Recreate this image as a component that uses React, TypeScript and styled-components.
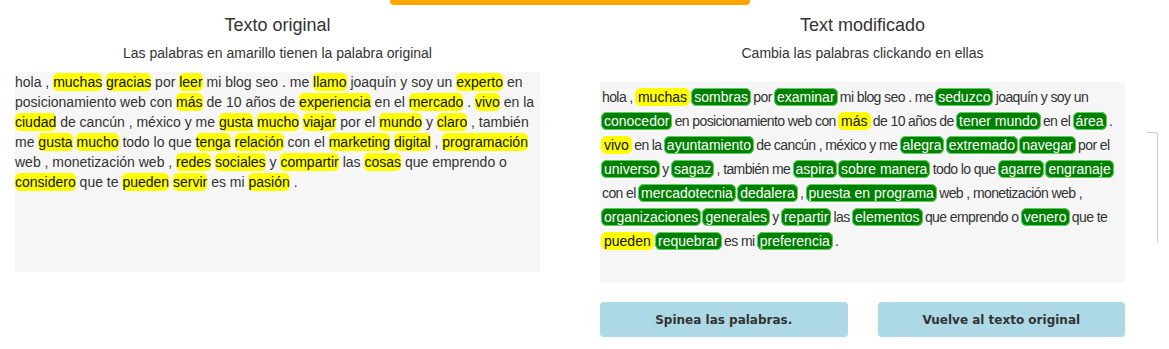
import React from "react";
import styled, { createGlobalStyle } from "styled-components";

const originalText =
  "hola , [muchas] [gracias] por [leer] mi blog seo . me [llamo] joaquín y soy un [experto] en posicionamiento web con [más] de 10 años de [experiencia] en el [mercado] . [vivo] en la [ciudad] de cancún , méxico y me [gusta] [mucho] [viajar] por el [mundo] y [claro] , también me [gusta] [mucho] todo lo que [tenga] [relación] con el [marketing] [digital] , [programación] web , monetización web , [redes] [sociales] y [compartir] las [cosas] que emprendo o [considero] que te [pueden] [servir] es mi [pasión] .";

const modifiedText =
  "hola , [muchas] {sombras} por {examinar} mi blog seo . me {seduzco} joaquín y soy un {conocedor} en posicionamiento web con [más] de 10 años de {tener mundo} en el {área} . [vivo] en la {ayuntamiento} de cancún , méxico y me {alegra} {extremado} {navegar} por el {universo} y {sagaz} , también me {aspira} {sobre manera} todo lo que {agarre} {engranaje} con el {mercadotecnia} {dedalera} , {puesta en programa} web , monetización web , {organizaciones} {generales} y {repartir} las {elementos} que emprendo o {venero} que te [pueden] {requebrar} es mi {preferencia} .";

type Token = { text: string; kind: "plain" | "original" | "changed" };

const tokenize = (src: string): Token[] =>
  src
    .split(/(\[[^\]]+\]|\{[^}]+\})/)
    .filter((part) => part.length > 0)
    .map((part) => {
      if (part.startsWith("[")) return { text: part.slice(1, -1), kind: "original" };
      if (part.startsWith("{")) return { text: part.slice(1, -1), kind: "changed" };
      return { text: part, kind: "plain" };
    });

const App: React.FC = () => {
  const left = tokenize(originalText);
  const right = tokenize(modifiedText);

  return (
    <>
      <GlobalStyle />
      <TopBar />
      <Page>
        <Column>
          <Title>Texto original</Title>
          <Subtitle>Las palabras en amarillo tienen la palabra original</Subtitle>
          <OriginalBox>
            {left.map((t, i) =>
              t.kind === "plain" ? (
                <React.Fragment key={i}>{t.text}</React.Fragment>
              ) : (
                <Mark key={i}>{t.text}</Mark>
              )
            )}
          </OriginalBox>
        </Column>

        <Column>
          <Title>Text modificado</Title>
          <Subtitle>Cambia las palabras clickando en ellas</Subtitle>
          <ModifiedBox>
            {right.map((t, i) =>
              t.kind === "plain" ? (
                <React.Fragment key={i}>{t.text}</React.Fragment>
              ) : (
                <Pill key={i} $changed={t.kind === "changed"}>
                  {t.text}
                </Pill>
              )
            )}
          </ModifiedBox>
          <Buttons>
            <ActionButton>Spinea las palabras.</ActionButton>
            <ActionButton>Vuelve al texto original</ActionButton>
          </Buttons>
        </Column>

        <SideEdge />
      </Page>
    </>
  );
};

const GlobalStyle = createGlobalStyle`
  body {
    margin: 0;
    background: #ffffff;
    font-family: "Liberation Sans", Arial, sans-serif;
    color: #333333;
  }
`;

const TopBar = styled.div`
  width: 360px;
  height: 5px;
  margin-left: 390px;
  background: #ffa500;
  border-radius: 0 0 4px 4px;
`;

const Page = styled.div`
  display: flex;
  align-items: flex-start;
  padding-left: 15px;
  gap: 60px;
`;

const Column = styled.div`
  width: 525px;
  display: flex;
  flex-direction: column;
`;

const Title = styled.h2`
  margin: 9px 0 0;
  font-size: 18px;
  font-weight: normal;
  line-height: 22px;
  text-align: center;
  color: #333333;
`;

const Subtitle = styled.p`
  margin: 9px 0 0;
  font-size: 14px;
  line-height: 17px;
  text-align: center;
  color: #333333;
`;

const OriginalBox = styled.div`
  margin-top: 10px;
  height: 200px;
  background: #f6f6f6;
  font-size: 14px;
  line-height: 20px;
  color: #333333;
`;

const Mark = styled.span`
  background: #ffff00;
  color: #111111;
  border-radius: 5px;
  padding: 1px 0;
`;

const ModifiedBox = styled.div`
  margin-top: 20px;
  height: 200px;
  box-sizing: border-box;
  padding: 3px 2px 0;
  background: #f6f6f6;
  font-size: 14px;
  line-height: 24px;
  letter-spacing: -0.6px;
  color: #333333;
`;

const Pill = styled.span<{ $changed: boolean }>`
  letter-spacing: 0;
  margin: 0 -1px;
  padding: 0 2px;
  border-radius: 6px;
  border: 1px solid ${(p) => (p.$changed ? "#5ccf5c" : "#ffff00")};
  background: ${(p) => (p.$changed ? "#008000" : "#ffff00")};
  color: ${(p) => (p.$changed ? "#ffffff" : "#111111")};
`;

const Buttons = styled.div`
  display: flex;
  gap: 30px;
  margin-top: 20px;
`;

const ActionButton = styled.button`
  flex: 1;
  height: 35px;
  border: none;
  border-radius: 4px;
  background: #add8e6;
  color: #333333;
  font-family: "DejaVu Sans", Verdana, sans-serif;
  font-size: 12px;
  font-weight: bold;
  cursor: pointer;
`;

const SideEdge = styled.div`
  margin: 127px 0 0 -38px;
  width: 10px;
  height: 110px;
  border-top: 1px solid #cccccc;
  border-right: 1px solid #cccccc;
  border-top-right-radius: 3px;
`;

export default App;
